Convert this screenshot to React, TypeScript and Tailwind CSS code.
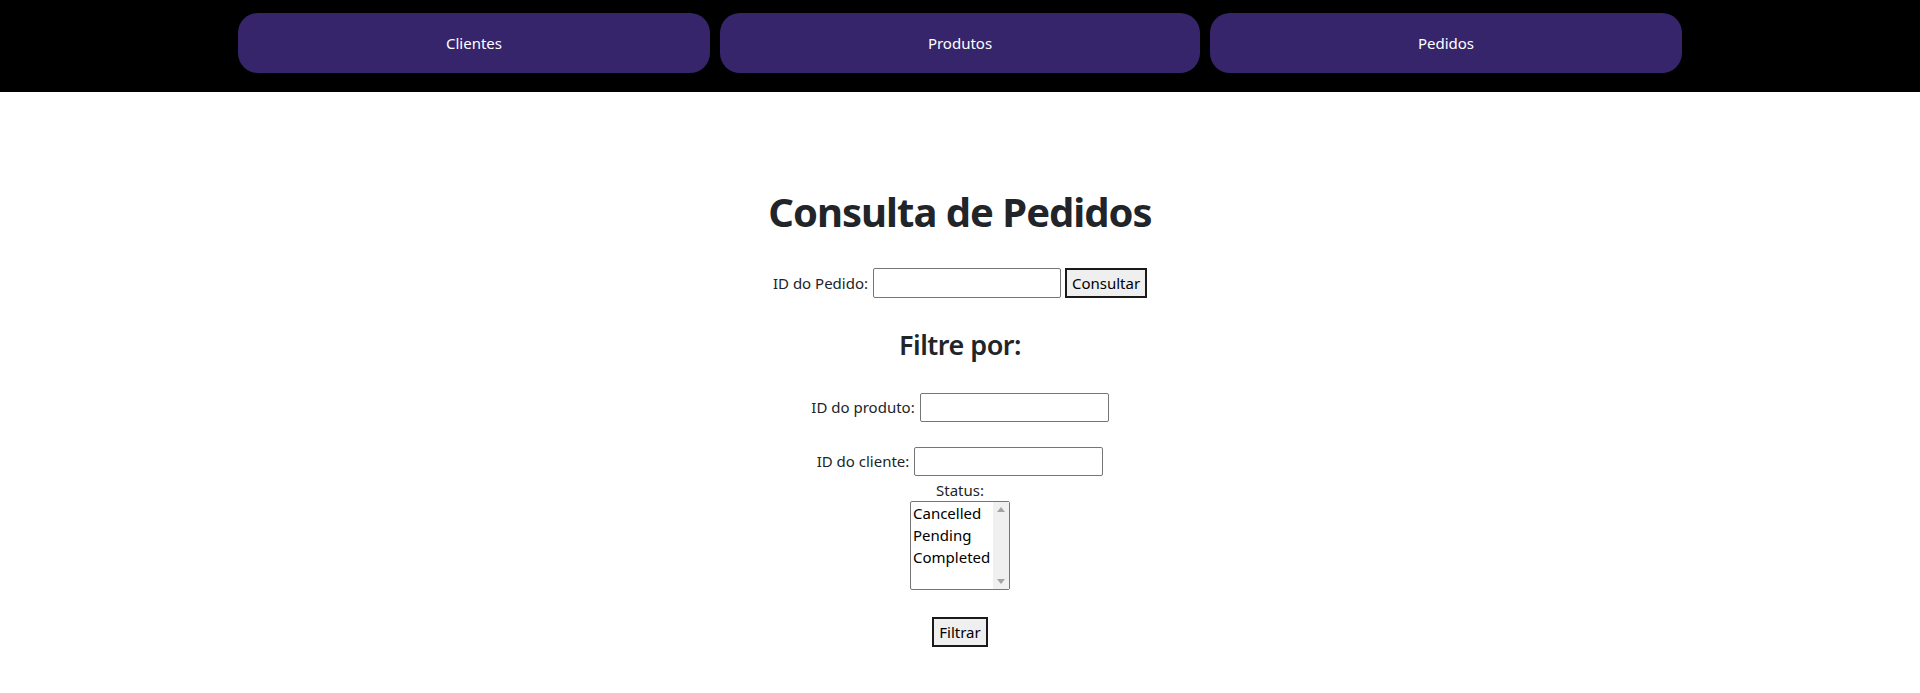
import React from "react";

const navItems = [
  { label: "Clientes", w: "w-[472px]" },
  { label: "Produtos", w: "w-[480px]" },
  { label: "Pedidos", w: "w-[472px]" },
];

const statusOptions = ["Cancelled", "Pending", "Completed"];

const App = () => {
  return (
    <div className="min-h-[693px] w-full bg-white font-['Noto_Sans',sans-serif] text-[#212529]">
      {/* Top navigation */}
      <nav className="flex h-[92px] w-full items-start justify-center gap-[10px] bg-black pt-[13px]">
        {navItems.map((item) => (
          <a
            key={item.label}
            href="#"
            className={`${item.w} flex h-[60px] items-center justify-center rounded-[20px] bg-[#37256b] text-[15px] text-white`}
          >
            {item.label}
          </a>
        ))}
      </nav>

      <main className="flex flex-col items-center">
        <h1 className="mt-[95px] text-[40px] font-bold leading-[50px] tracking-[-1px] text-[#212529]">
          Consulta de Pedidos
        </h1>

        <div className="mt-[31px] flex h-[30px] items-center text-[15px]">
          <label>ID do Pedido:</label>
          <input className="ml-[5px] h-[30px] w-[188px] rounded-[2px] border border-[#767676] px-1 text-[15px]" />
          <button className="ml-[4px] h-[30px] w-[82px] border-2 border-[#1a1a1a] bg-[#efefef] text-[15px] text-black">
            Consultar
          </button>
        </div>

        <h2 className="mt-[29px] text-[27px] font-semibold leading-[36px] tracking-[-0.5px] text-[#212529]">
          Filtre por:
        </h2>

        <div className="mt-[30px] flex h-[29px] items-center text-[15px]">
          <label>ID do produto:</label>
          <input className="ml-[5px] h-[29px] w-[189px] rounded-[2px] border border-[#767676] px-1" />
        </div>

        <div className="mt-[25px] flex h-[29px] items-center text-[15px]">
          <label>ID do cliente:</label>
          <input className="ml-[5px] h-[29px] w-[189px] rounded-[2px] border border-[#767676] px-1" />
        </div>

        <div className="mt-[4px] text-[15px] leading-[20px]">Status:</div>

        {/* Listbox */}
        <div
          role="listbox"
          className="mt-[1px] flex h-[89px] w-[100px] rounded-[2px] border border-[#767676] bg-white"
        >
          <div className="flex-1 pl-[2px] text-[15px] leading-[22px] text-black">
            {statusOptions.map((opt) => (
              <div key={opt}>{opt}</div>
            ))}
          </div>
          <div className="flex w-[16px] flex-col items-center justify-between bg-[#f0f0f0] py-[5px]">
            <svg width="8" height="5" viewBox="0 0 8 5">
              <path d="M0 5 L4 0 L8 5 Z" fill="#a3a3a3" />
            </svg>
            <svg width="8" height="5" viewBox="0 0 8 5">
              <path d="M0 0 L4 5 L8 0 Z" fill="#a3a3a3" />
            </svg>
          </div>
        </div>

        <button className="mt-[27px] h-[30px] w-[56px] border-2 border-[#1a1a1a] bg-[#efefef] text-[15px] text-black">
          Filtrar
        </button>
      </main>
    </div>
  );
};

export default App;
